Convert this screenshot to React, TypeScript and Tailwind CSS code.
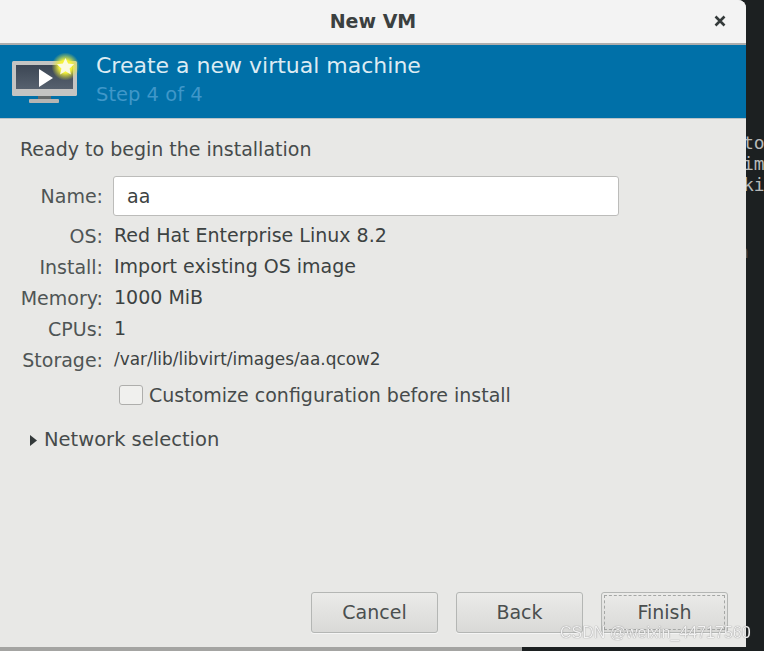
function Row({ label, children }: { label: string; children: React.ReactNode }) {
  return (
    <div className="flex items-center h-[31px]">
      <div className="w-[103px] text-right text-[19px] leading-[24px] text-[#4f5555] whitespace-nowrap">{label}</div>
      <div className="ml-[11px] text-[#3c4242] whitespace-nowrap">{children}</div>
    </div>
  );
}
function Btn({ label, focus }: { label: string; focus?: boolean }) {
  return (
    <div className="w-[127px] h-[41px] rounded-[3px] border border-[#b4b6b4] bg-gradient-to-b from-[#ebebe9] to-[#d9d9d7] flex items-center justify-center text-[19px] text-[#4a4f4f] shadow-[0_1px_0_#f5f5f5] p-[2px]">
      <div className={focus ? "w-full h-full flex items-center justify-center border border-dashed border-[#a5a7a5]" : "w-full h-full flex items-center justify-center"}>{label}</div>
    </div>
  );
}
function Logo() {
  return (
    <svg width="72" height="60" viewBox="0 0 72 60" className="block">
      <defs>
        <radialGradient id="glow">
          <stop offset="0.45" stopColor="#f4f23a" />
          <stop offset="1" stopColor="#dfe23a" stopOpacity="0" />
        </radialGradient>
        <linearGradient id="screen" x1="0" y1="0" x2="0" y2="1">
          <stop offset="0" stopColor="#3c4654" />
          <stop offset="1" stopColor="#56616e" />
        </linearGradient>
      </defs>
      <rect x="0" y="8" width="65" height="35" rx="1.5" fill="#c4c4c2" />
      <rect x="4" y="12" width="57" height="24" fill="url(#screen)" />
      <path d="M26 43h13v3H26z" fill="#666a6a" />
      <rect x="17" y="46" width="30" height="4" rx="1" fill="#b5b5b3" />
      <path d="M27 16 41 25 27 34z" fill="#ffffff" />
      <circle cx="53.5" cy="13.5" r="14" fill="url(#glow)" />
      <path d="M53.5 5l2.6 5.6 6 .7-4.5 4.1 1.3 6-5.4-3.1-5.4 3.1 1.3-6-4.5-4.1 6-.7z" fill="#fbfbe0" />
    </svg>
  );
}
export default function App() {
  return (
    <div className="w-[764px] h-[651px] overflow-hidden bg-[#1c2021] flex flex-col font-['DejaVu_Sans',sans-serif]">
      <div className="flex h-[647px]">
        <div className="w-[746px] shrink-0 bg-[#e8e8e6] flex flex-col rounded-tr-[8px] overflow-hidden">
          <div className="h-[45px] shrink-0 bg-[#f3f3f3] border-b-[2px] border-[#adadad] flex items-center relative">
            <div className="w-full text-center text-[19px] font-bold text-[#3b4040]">New VM</div>
            <svg width="12" height="12" viewBox="0 0 12 12" className="absolute left-[714px] top-[15px]">
              <path d="M1.5 1.5l9 9M10.5 1.5l-9 9" stroke="#343a3a" strokeWidth="2.6" />
            </svg>
          </div>
          <div className="h-[74px] shrink-0 bg-[#0070a8] border-b border-[#b9c3c8] flex items-start">
            <div className="ml-[12px] mt-[8px] w-[72px] shrink-0"><Logo /></div>
            <div className="ml-[12px]">
              <div className="text-[22px] leading-[28px] mt-[7px] text-[#dcebf3] whitespace-nowrap">Create a new virtual machine</div>
              <div className="text-[19.5px] leading-[24px] mt-[3px] text-[#3f97c9]">Step 4 of 4</div>
            </div>
          </div>
          <div className="flex-1 flex flex-col pl-[20px] pr-[127px]">
            <div className="mt-[18px] text-[19px] leading-[24px] text-[#464b4b] whitespace-nowrap">Ready to begin the installation</div>
            <div className="mt-[15px] -ml-[20px] flex flex-col">
              <div className="flex items-center h-[40px] mb-[4px]">
                <div className="w-[103px] text-right text-[19px] text-[#4f5555]">Name:</div>
                <div className="ml-[10px] w-[506px] h-[40px] bg-white border border-[#bcbcba] rounded-[3px] px-[13px] flex items-center text-[19px] text-[#3c4242]">aa</div>
              </div>
              <Row label="OS:"><span className="text-[19px]">Red Hat Enterprise Linux 8.2</span></Row>
              <Row label="Install:"><span className="text-[19px]">Import existing OS image</span></Row>
              <Row label="Memory:"><span className="text-[19px]">1000 MiB</span></Row>
              <Row label="CPUs:"><span className="text-[19px]">1</span></Row>
              <Row label="Storage:"><span className="text-[16.9px]">/var/lib/libvirt/images/aa.qcow2</span></Row>
            </div>
            <div className="mt-[8px] ml-[99px] flex items-center h-[24px]">
              <div className="w-[24px] h-[20px] shrink-0 rounded-[3px] border border-[#aeaeac] bg-[#f0f0ee]" />
              <div className="ml-[6px] text-[19px] text-[#464b4b] whitespace-nowrap">Customize configuration before install</div>
            </div>
            <div className="mt-[21px] ml-[10px] flex items-center h-[24px]">
              <svg width="7" height="11" viewBox="0 0 7 11"><path d="M0 0l7 5.5L0 11z" fill="#33393a" /></svg>
              <div className="ml-[7px] text-[19.5px] text-[#464b4b]">Network selection</div>
            </div>
          </div>
          <div className="h-[55px] shrink-0 flex justify-end pr-[18px] gap-[18px]">
            <Btn label="Cancel" />
            <Btn label="Back" />
            <Btn label="Finish" focus />
          </div>
        </div>
        <div className="w-[18px] shrink-0 overflow-hidden flex flex-col pt-[132px] font-['DejaVu_Sans_Mono',monospace] text-[18px] leading-[21px] text-[#b7b9b8]">
          <div className="-ml-[3px] whitespace-nowrap">to</div>
          <div className="-ml-[3px] whitespace-nowrap">im</div>
          <div className="-ml-[3px] whitespace-nowrap">ki</div>
          <div className="mt-[46px] -ml-[8px] whitespace-nowrap text-[#555]">n</div>
        </div>
      </div>
      <div className="h-[4px] w-[522px] bg-[#a4a4a2]" />
      <div className="fixed left-[560px] top-[623px] text-[16px] leading-[20px] text-[#f2f2f2] [text-shadow:0_0_1px_#666] font-['Liberation_Sans',sans-serif] whitespace-nowrap">CSDN @weixin_44717560</div>
    </div>
  );
}
